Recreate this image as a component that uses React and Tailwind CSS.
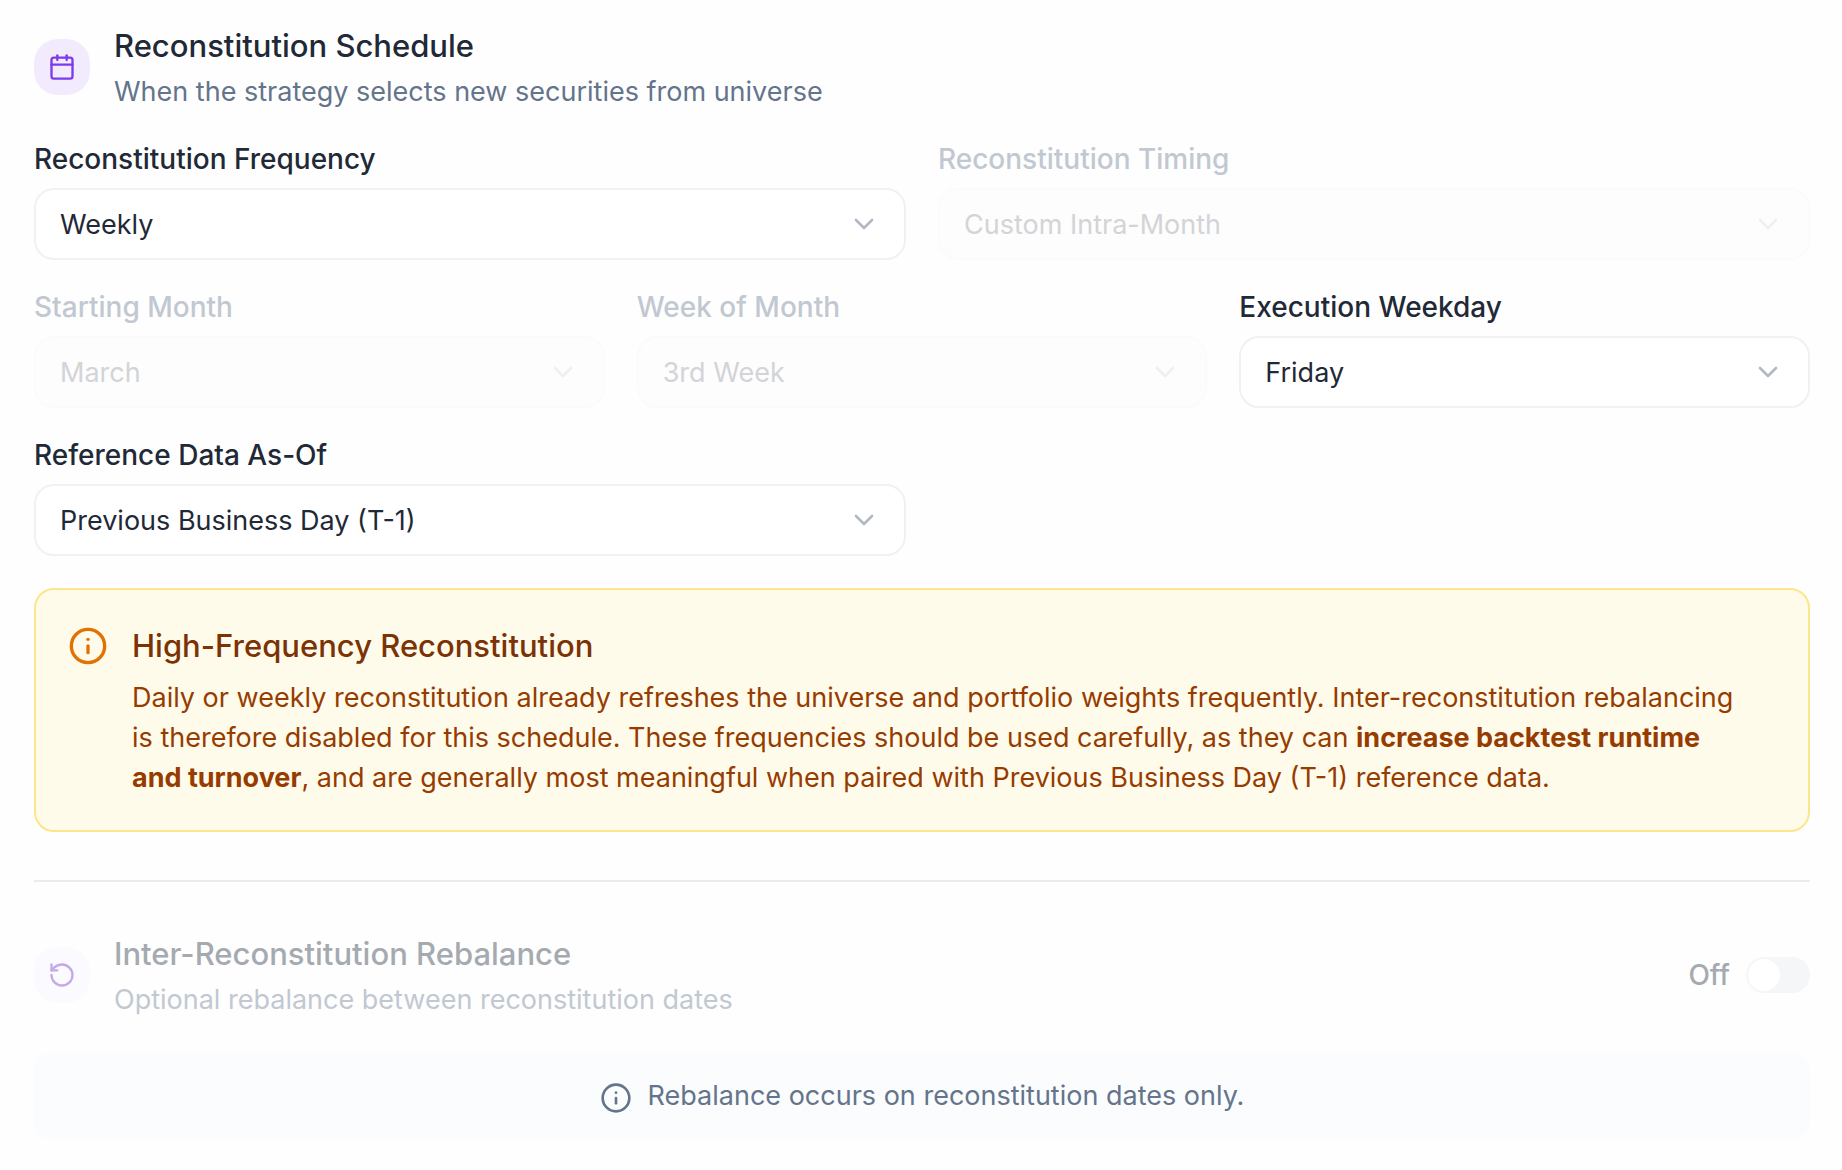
import { useId } from "react";
import { Calendar, ChevronDown, Info, RotateCcw } from "lucide-react";

function SectionHeader({ icon: Icon, title, description, muted, children }) {
  return (
    <div className="flex items-center justify-between">
      <div className="flex items-center gap-6">
        <div
          className={
            muted
              ? "flex size-14 items-center justify-center rounded-3xl bg-[#fbfaff] text-[#c3a9e8]"
              : "flex size-14 items-center justify-center rounded-3xl bg-[#f2ebfd] text-[#7c3aed]"
          }
        >
          <Icon size={28} />
        </div>
        <div>
          <h2 className={muted ? "text-[31px] leading-12 font-medium text-[#a5aab1]" : "text-[31px] leading-12 font-medium text-[#1f2937]"}>
            {title}
          </h2>
          <p className={muted ? "mt-0.5 text-[27px] leading-10 text-[#c1c8d2]" : "mt-0.5 text-[27px] leading-10 text-[#64748b]"}>
            {description}
          </p>
        </div>
      </div>
      {children}
    </div>
  );
}

function SelectField({ label, value, disabled }) {
  const id = useId();
  return (
    <div className="flex flex-col gap-2.5">
      <label
        htmlFor={id}
        className={
          disabled
            ? "text-[28px] leading-[38px] font-medium text-[#c1c8d2]"
            : "text-[28px] leading-[38px] font-medium text-[#1f2937]"
        }
      >
        {label}
      </label>
      <div className="relative">
        <select
          id={id}
          defaultValue={value}
          disabled={disabled}
          className="h-18 w-full appearance-none rounded-[20px] border-2 border-[#f1f1f2] bg-white px-6 pt-0.5 text-[27px] text-[#1f2937] opacity-100 disabled:border-[#fbfbfb] disabled:bg-[#fdfdfd] disabled:text-[#d2d4d7]"
        >
          <option>{value}</option>
        </select>
        <ChevronDown
          size={32}
          className={
            disabled
              ? "pointer-events-none absolute top-5 right-6.5 text-[#eff0f3]"
              : "pointer-events-none absolute top-5 right-6.5 text-[#b1b9c5]"
          }
        />
      </div>
    </div>
  );
}

export default function App() {
  return (
    <main className="flex min-h-screen flex-col bg-[#fefefe] pt-[22px] pr-8 pb-7 pl-8.5 font-['Inter',sans-serif]">
      <section className="flex flex-col gap-7">
        <SectionHeader
          icon={Calendar}
          title="Reconstitution Schedule"
          description="When the strategy selects new securities from universe"
        />
        <div className="grid grid-cols-2 gap-8">
          <SelectField label="Reconstitution Frequency" value="Weekly" />
          <SelectField label="Reconstitution Timing" value="Custom Intra-Month" disabled />
        </div>
        <div className="grid grid-cols-3 gap-8">
          <SelectField label="Starting Month" value="March" disabled />
          <SelectField label="Week of Month" value="3rd Week" disabled />
          <SelectField label="Execution Weekday" value="Friday" />
        </div>
        <div className="grid grid-cols-2 gap-8">
          <SelectField label="Reference Data As-Of" value="Previous Business Day (T-1)" />
        </div>
      </section>

      <div role="note" className="mt-8 flex gap-6 rounded-[20px] border-2 border-[#fde68a] bg-[#fffbeb] py-8 pr-16 pl-8">
        <Info size={40} className="mt-1 shrink-0 text-[#e17100]" />
        <div>
          <h3 className="text-[31px] leading-12 font-medium text-[#7b3306]">High-Frequency Reconstitution</h3>
          <p className="mt-2 text-[27px] leading-10 text-[#973c00]">
            Daily or weekly reconstitution already refreshes the universe and portfolio weights frequently.
            Inter-reconstitution rebalancing is therefore disabled for this schedule. These frequencies should be used
            carefully, as they can <strong>increase backtest runtime and turnover</strong>, and are generally most
            meaningful when paired with Previous Business Day (T-1) reference data.
          </p>
        </div>
      </div>

      <hr className="my-12 border-t-2 border-[#ebecf0]" />

      <section className="flex flex-col gap-8">
        <SectionHeader
          icon={RotateCcw}
          title="Inter-Reconstitution Rebalance"
          description="Optional rebalance between reconstitution dates"
          muted
        >
          <div className="flex items-center gap-4">
            <label htmlFor="rebalance" className="text-[28px] leading-10 font-medium text-[#a5aab1]">
              Off
            </label>
            <button
              id="rebalance"
              type="button"
              role="switch"
              aria-checked="false"
              disabled
              className="flex h-9 w-16 items-center rounded-full bg-[#f5f6f8] p-0.5"
            >
              <span className="size-8 rounded-full bg-white" />
            </button>
          </div>
        </SectionHeader>
        <div className="flex items-center justify-center gap-4 rounded-[20px] bg-[#fbfcfe] p-6 text-[27px] leading-10 text-[#64748b]">
          <Info size={32} className="mt-1 shrink-0" />
          <p>Rebalance occurs on reconstitution dates only.</p>
        </div>
      </section>
    </main>
  );
}
